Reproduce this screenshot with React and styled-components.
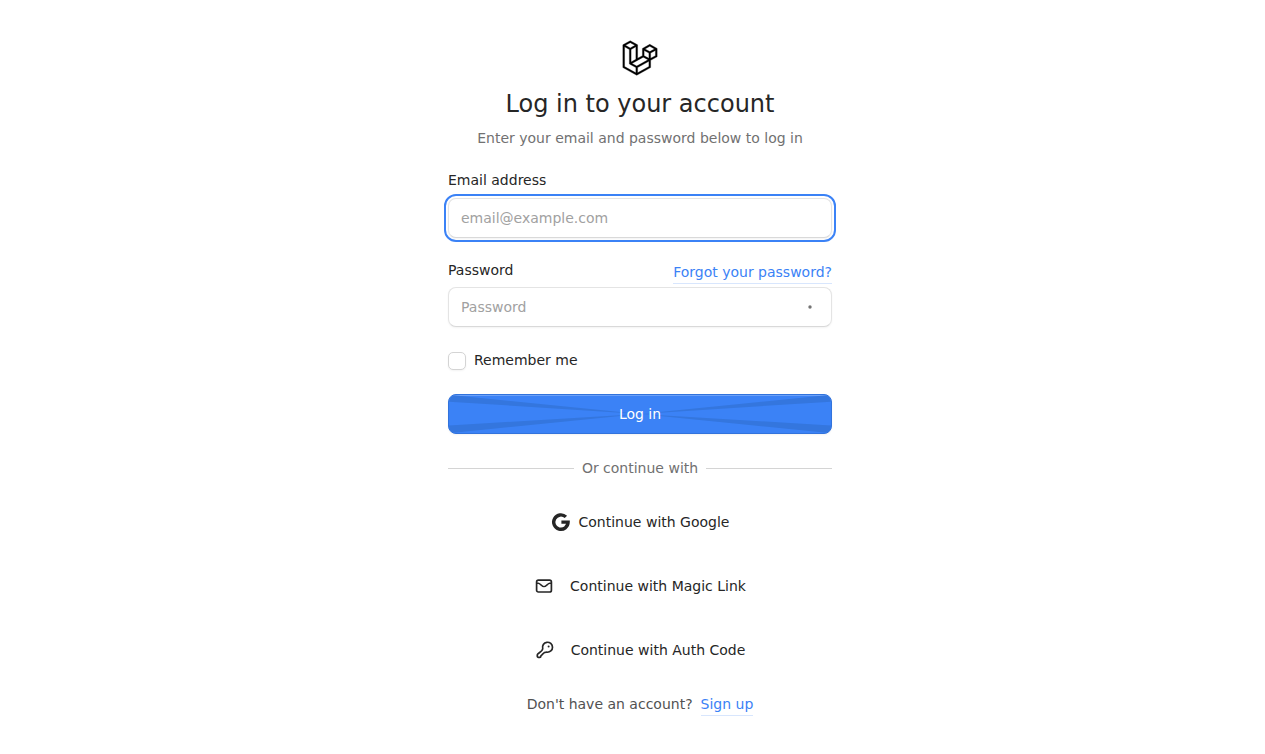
import React from "react";
import styled, { createGlobalStyle } from "styled-components";

const GlobalStyle = createGlobalStyle`
  *, *::before, *::after { box-sizing: border-box; }
  body {
    margin: 0;
    background: #fff;
    color: #262626;
    font: 14px/20px "DejaVu Sans", sans-serif;
  }
  button, input { font: inherit; color: inherit; }
`;

const Page = styled.main`
  display: flex;
  justify-content: center;
  padding: 40px 0 40px 15px;
`;

const Card = styled.div`
  display: flex;
  flex-direction: column;
  gap: 24px;
  width: 100%;
  max-width: 384px;
`;

const Header = styled.header`
  display: flex;
  flex-direction: column;
  align-items: center;
  gap: 8px;
  text-align: center;
`;

const LogoLink = styled.a`
  display: block;
  height: 40px;
  color: #000;
  svg { display: block; width: 36px; height: 36px; }
`;

const Title = styled.h1`
  margin: 0;
  font-size: 24px;
  font-weight: 400;
  line-height: 32px;
`;

const Subtitle = styled.p`
  margin: 0;
  color: #717171;
`;

const Form = styled.form`
  display: flex;
  flex-direction: column;
  gap: 24px;
`;

const Label = styled.label`
  line-height: 16px;
`;

const Field = styled.div`
  display: flex;
  flex-direction: column;
  gap: ${(p) => p.$gap}px;
`;

const LabelRow = styled.div`
  display: flex;
  justify-content: space-between;
  align-items: flex-start;
`;

const TextLink = styled.a`
  display: inline-block;
  padding-bottom: 1px;
  border-bottom: 1px solid #d8e6fd;
  color: #3b82f6;
  text-decoration: none;
`;

const InputFrame = styled.div`
  display: flex;
  align-items: center;
  height: 40px;
  border: 1px solid #e4e4e4;
  border-bottom-color: #d9d9d9;
  border-radius: 8px;
  background: #fff;
  box-shadow: 0 1px 2px rgba(0, 0, 0, 0.05);
  ${(p) => p.$focused && "outline: 2px solid #3b82f6; outline-offset: 2px;"}
`;

const Input = styled.input`
  flex: 1;
  min-width: 0;
  height: 100%;
  padding: 0 12px;
  border: 0;
  outline: 0;
  background: transparent;
  &::placeholder { color: #a1a1a1; opacity: 1; }
`;

const RevealButton = styled.button`
  display: grid;
  place-items: center;
  width: 32px;
  height: 32px;
  margin-right: 5px;
  padding: 0;
  border: 0;
  background: none;
  svg { width: 20px; height: 20px; }
`;

const CheckRow = styled.div`
  display: flex;
  align-items: flex-end;
  gap: 8px;
  height: 19px;
`;

const Checkbox = styled.input`
  appearance: none;
  width: 18px;
  height: 18px;
  margin: 0;
  border: 1px solid #d4d4d4;
  border-radius: 5px;
  background: #fff;
  box-shadow: 0 1px 2px rgba(0, 0, 0, 0.05);
  &:checked { background: #3b82f6; }
`;

const CheckLabel = styled.label`
  line-height: 20px;
`;

const PrimaryButton = styled.button`
  position: relative;
  height: 40px;
  padding: 0;
  overflow: hidden;
  border: 1px solid #3273dc;
  border-radius: 8px;
  background: #3b82f6;
  box-shadow: inset 0 1px rgba(255, 255, 255, 0.25), 0 1px 2px rgba(0, 0, 0, 0.05);
  color: #fff;
  svg {
    position: absolute;
    inset: 0;
    width: 100%;
    height: 100%;
  }
  span { position: relative; }
`;

const Divider = styled.div`
  display: flex;
  align-items: center;
  gap: 8px;
  color: #717171;
  &::before, &::after {
    content: "";
    flex: 1;
    height: 1px;
    background: #d4d4d4;
  }
`;

const GhostButton = styled.button`
  display: flex;
  align-items: center;
  justify-content: center;
  gap: ${(p) => p.$gap}px;
  height: 40px;
  padding: 0;
  border: 0;
  background: none;
  svg { width: 20px; height: 20px; }
`;

const Footer = styled.p`
  display: flex;
  justify-content: center;
  gap: 8px;
  margin: 0;
  color: #525252;
`;

const Logo = () => (
  <svg viewBox="0 0 40 42" fill="currentColor" stroke="currentColor" strokeWidth="0.4" aria-hidden="true">
    <path
      fillRule="evenodd"
      clipRule="evenodd"
      d="M17.2 5.633 8.6.855 0 5.633v26.51l16.2 9 16.2-9v-8.442l7.6-4.223V9.856l-8.6-4.777-8.6 4.777V18.3l-5.6 3.111V5.633ZM38 18.301l-5.6 3.11v-6.157l5.6-3.11V18.3Zm-1.06-7.856-5.54 3.078-5.54-3.079 5.54-3.078 5.54 3.079ZM24.8 18.3v-6.157l5.6 3.111v6.158L24.8 18.3Zm-1 1.732 5.54 3.078-13.14 7.302-5.54-3.078 13.14-7.3v-.002Zm-16.2 7.89 7.6 4.222V38.3L2 30.966V7.92l5.6 3.111v16.892ZM8.6 9.3 3.06 6.222 8.6 3.143l5.54 3.08L8.6 9.3Zm21.8 15.51-13.2 7.334V38.3l13.2-7.334v-6.156ZM9.6 11.034l5.6-3.11v14.6l-5.6 3.11v-14.6Z"
    />
  </svg>
);

const Rays = () => (
  <svg viewBox="0 0 384 40" preserveAspectRatio="none" fill="#3476de" aria-hidden="true">
    <path d="M0 0L12 1L192 20L0 7ZM0 40L12 39L192 20L0 32ZM384 0L372 1L192 20L384 7ZM384 40L372 39L192 20L384 32Z" />
  </svg>
);

const DotIcon = () => (
  <svg viewBox="0 0 20 20" aria-hidden="true">
    <circle cx="10" cy="10" r="1.7" fill="#737373" />
  </svg>
);

const GoogleIcon = () => (
  <svg viewBox="0 0 20 20" fill="none" stroke="currentColor" strokeWidth="3.4" aria-hidden="true">
    <path d="M14.9 4.9A7.2 7.2 0 1 0 17.1 10.1H10.4" />
  </svg>
);

const MailIcon = () => (
  <svg viewBox="0 0 20 20" fill="none" stroke="currentColor" strokeWidth="1.7" strokeLinecap="round" strokeLinejoin="round" aria-hidden="true">
    <rect x="2.6" y="4.2" width="14.8" height="11.8" rx="1.8" />
    <path d="M3 7.3H4.2C6.2 7.4 7.8 10.6 10 10.6S13.8 7.4 15.8 7.3H17" strokeWidth="1.4" />
  </svg>
);

const KeyIcon = () => (
  <svg viewBox="0 0 20 20" fill="none" stroke="currentColor" strokeWidth="1.7" strokeLinecap="round" strokeLinejoin="round" aria-hidden="true">
    <path d="M7.7 8.6A5 5 0 1 1 11.9 12.2C8.4 12.2 8.5 13.3 6.8 15C6.3 15.6 5.8 15.6 5.8 16.3A1 1 0 0 1 4.8 17.3H3.3A1 1 0 0 1 2.3 16.3V14.8C2.3 13.4 7.9 11.4 7.7 8.6Z" />
    <circle cx="13.6" cy="6.4" r="1" fill="currentColor" stroke="none" />
  </svg>
);

export default function App() {
  return (
    <>
      <GlobalStyle />
      <Page>
        <Card>
          <Header>
            <LogoLink href="#" aria-label="Home"><Logo /></LogoLink>
            <Title>Log in to your account</Title>
            <Subtitle>Enter your email and password below to log in</Subtitle>
          </Header>
          <Form onSubmit={(e) => e.preventDefault()}>
            <Field $gap={10}>
              <Label htmlFor="email">Email address</Label>
              <InputFrame $focused>
                <Input id="email" type="email" placeholder="email@example.com" />
              </InputFrame>
            </Field>
            <Field $gap={3}>
              <LabelRow>
                <Label htmlFor="password">Password</Label>
                <TextLink href="#">Forgot your password?</TextLink>
              </LabelRow>
              <InputFrame>
                <Input id="password" type="password" placeholder="Password" />
                <RevealButton type="button" aria-label="Show password"><DotIcon /></RevealButton>
              </InputFrame>
            </Field>
            <CheckRow>
              <Checkbox id="remember" type="checkbox" />
              <CheckLabel htmlFor="remember">Remember me</CheckLabel>
            </CheckRow>
            <PrimaryButton type="submit">
              <Rays />
              <span>Log in</span>
            </PrimaryButton>
          </Form>
          <Divider>Or continue with</Divider>
          <GhostButton type="button" $gap={8}><GoogleIcon />Continue with Google</GhostButton>
          <GhostButton type="button" $gap={16}><MailIcon />Continue with Magic Link</GhostButton>
          <GhostButton type="button" $gap={16}><KeyIcon />Continue with Auth Code</GhostButton>
          <Footer>
            Don't have an account?
            <TextLink href="#">Sign up</TextLink>
          </Footer>
        </Card>
      </Page>
    </>
  );
}
